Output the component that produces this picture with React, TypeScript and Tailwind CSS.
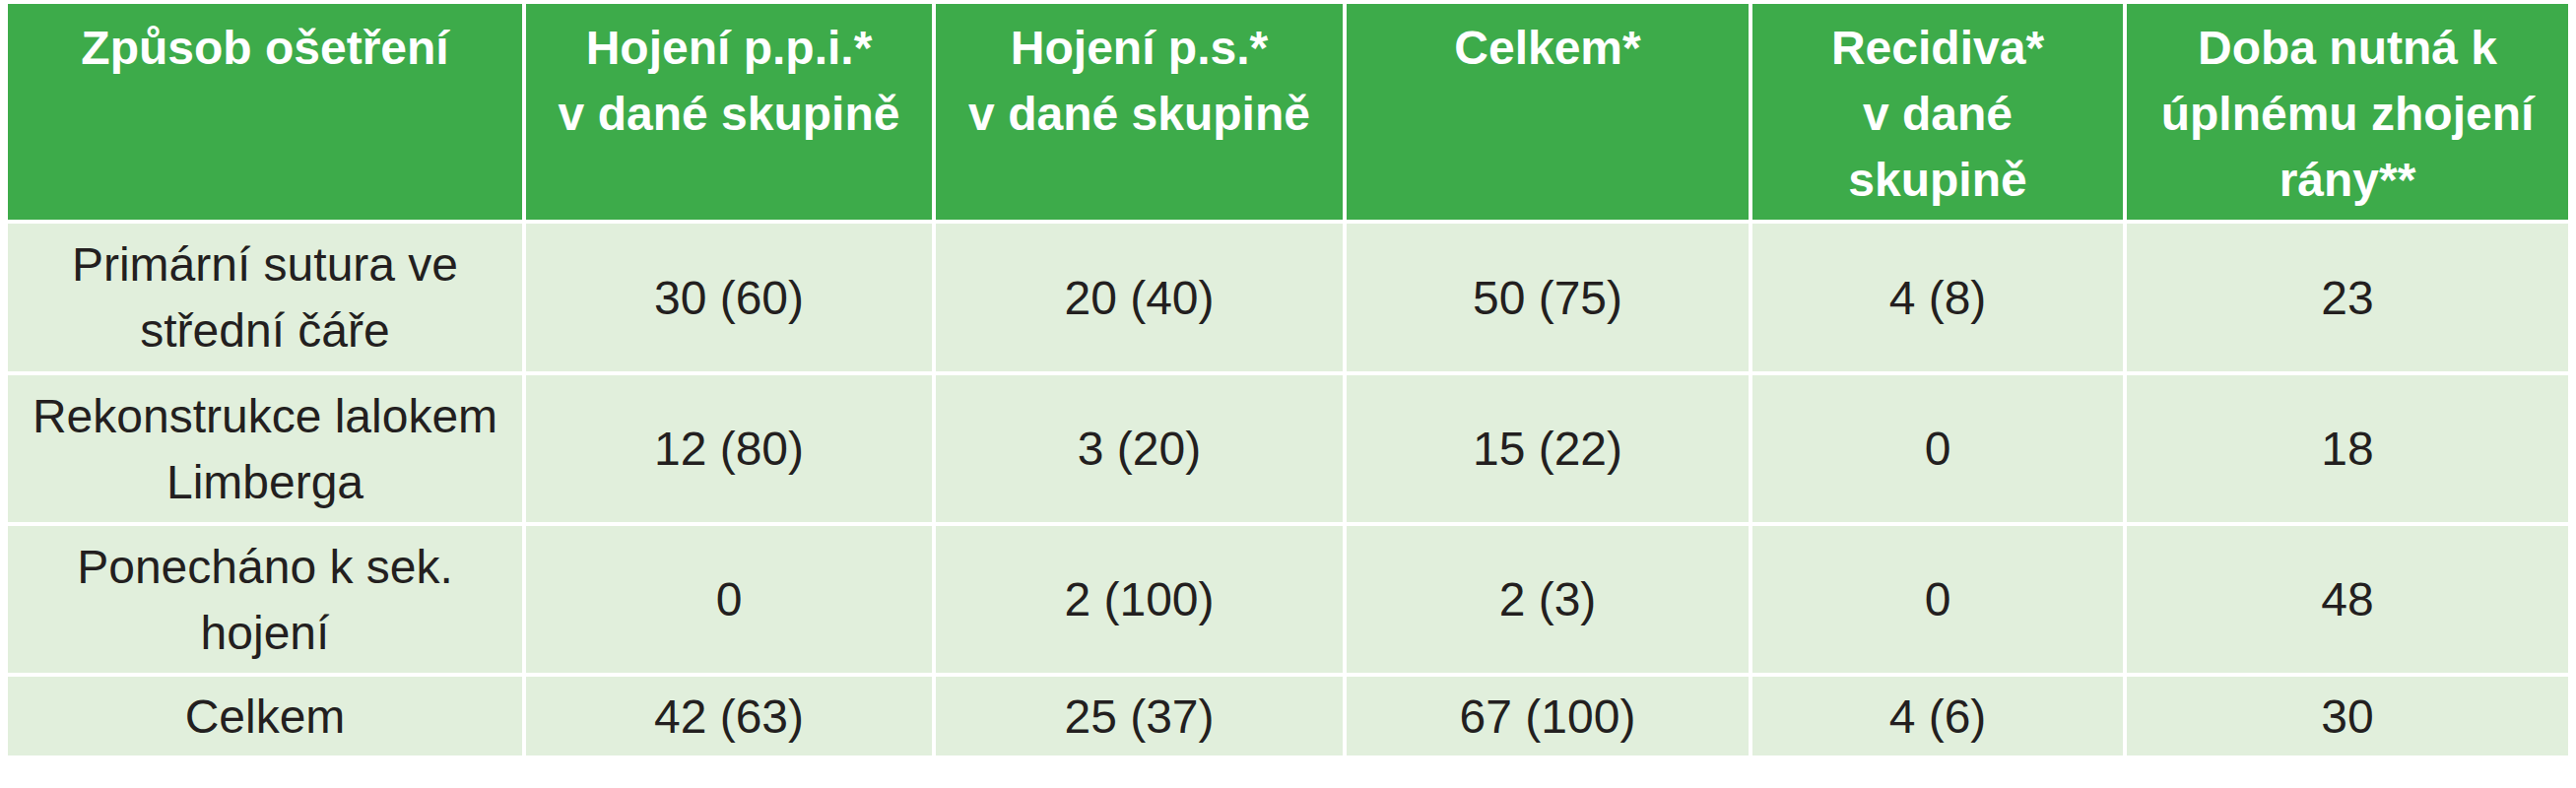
import React from "react";

type Row = {
  method: React.ReactNode;
  ppi: string;
  ps: string;
  total: string;
  relapse: string;
  days: string;
};

const headers: React.ReactNode[] = [
  "Způsob ošetření",
  <>
    Hojení p.p.i.*
    <br />v dané skupině
  </>,
  <>
    Hojení p.s.*
    <br />v dané skupině
  </>,
  "Celkem*",
  <>
    Recidiva*
    <br />v dané
    <br />
    skupině
  </>,
  <>
    Doba nutná k
    <br />
    úplnému zhojení
    <br />
    rány**
  </>,
];

const rows: Row[] = [
  {
    method: (
      <>
        Primární sutura ve
        <br />
        střední čáře
      </>
    ),
    ppi: "30 (60)",
    ps: "20 (40)",
    total: "50 (75)",
    relapse: "4 (8)",
    days: "23",
  },
  {
    method: (
      <>
        Rekonstrukce lalokem
        <br />
        Limberga
      </>
    ),
    ppi: "12 (80)",
    ps: "3 (20)",
    total: "15 (22)",
    relapse: "0",
    days: "18",
  },
  {
    method: (
      <>
        Ponecháno k sek.
        <br />
        hojení
      </>
    ),
    ppi: "0",
    ps: "2 (100)",
    total: "2 (3)",
    relapse: "0",
    days: "48",
  },
  {
    method: "Celkem",
    ppi: "42 (63)",
    ps: "25 (37)",
    total: "67 (100)",
    relapse: "4 (6)",
    days: "30",
  },
];

export default function App() {
  return (
    <div className="w-[2615px] h-[800px] bg-white pl-[8px] pt-[4px] font-['Liberation_Sans',Arial,sans-serif]">
      <div className="grid grid-cols-[522px_412px_413px_408px_376px_448px] grid-rows-[219px_150px_149px_149px_80px] gap-[4px] w-[2599px]">
        {headers.map((h, k) => (
          <div
            key={k}
            className="bg-[#3dab4a] text-white font-bold text-[48px] leading-[67px] text-center pt-[11px]"
          >
            {h}
          </div>
        ))}
        {rows.map((r, i) =>
          [r.method, r.ppi, r.ps, r.total, r.relapse, r.days].map((c, k) => (
            <div
              key={i + "-" + k}
              className="bg-[#e1efdc] text-[#231f20] text-[48px] leading-[67px] text-center flex items-center justify-center"
            >
              <span>{c}</span>
            </div>
          ))
        )}
      </div>
    </div>
  );
}
